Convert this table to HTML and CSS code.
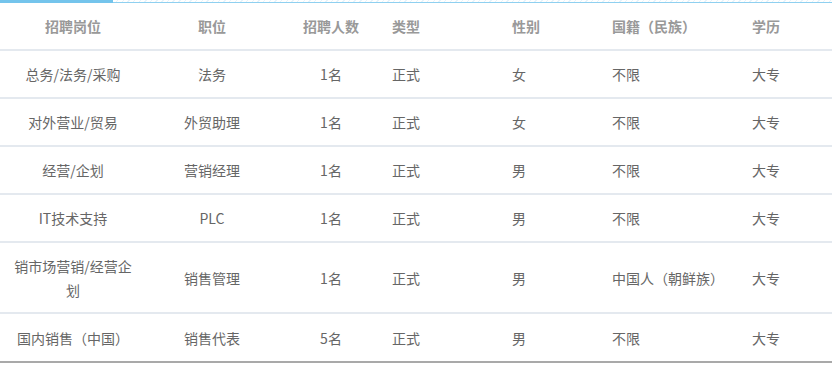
FILE: index.html
```html
<!DOCTYPE html>
<html lang="zh-CN">
<head>
<meta charset="utf-8">
<title>招聘信息</title>
<link rel="stylesheet" href="styles.css">
</head>
<body>
<div class="tabbar"><div class="tab-active"></div></div>
<table class="jobs">
  <colgroup>
    <col class="c1"><col class="c2"><col class="c3"><col class="c4"><col class="c5"><col class="c6"><col class="c7">
  </colgroup>
  <thead>
    <tr>
      <th class="ctr">招聘岗位</th><th class="ctr">职位</th><th class="ctr">招聘人数</th><th>类型</th><th>性别</th><th>国籍（民族）</th><th>学历</th>
    </tr>
  </thead>
  <tbody>
    <tr><td class="ctr">总务/法务/采购</td><td class="ctr">法务</td><td class="ctr">1名</td><td>正式</td><td>女</td><td>不限</td><td>大专</td></tr>
    <tr><td class="ctr">对外营业/贸易</td><td class="ctr">外贸助理</td><td class="ctr">1名</td><td>正式</td><td>女</td><td>不限</td><td>大专</td></tr>
    <tr><td class="ctr">经营/企划</td><td class="ctr">营销经理</td><td class="ctr">1名</td><td>正式</td><td>男</td><td>不限</td><td>大专</td></tr>
    <tr><td class="ctr">IT技术支持</td><td class="ctr">PLC</td><td class="ctr">1名</td><td>正式</td><td>男</td><td>不限</td><td>大专</td></tr>
    <tr class="tall"><td class="ctr">销市场营销/经营企划</td><td class="ctr">销售管理</td><td class="ctr">1名</td><td>正式</td><td>男</td><td>中国人（朝鲜族）</td><td>大专</td></tr>
    <tr class="last"><td class="ctr">国内销售（中国）</td><td class="ctr">销售代表</td><td class="ctr">5名</td><td>正式</td><td>男</td><td>不限</td><td>大专</td></tr>
  </tbody>
</table>
</body>
</html>
```
FILE: styles.css
```css
html, body {
  margin: 0;
  padding: 0;
  background: #fff;
}
body {
  width: 832px;
  font-family: "Noto Sans CJK SC", "Microsoft YaHei", "Liberation Sans", sans-serif;
  font-size: 14px;
  color: #666;
}
.tabbar {
  height: 2px;
  border-bottom: 1px solid #8fd0f0;
  background: repeating-linear-gradient(135deg, #fff 0 3px, #e6f3fb 3px 4px);
}
.tab-active {
  width: 113px;
  height: 3px;
  background: #74c4ec;
}
.jobs {
  width: 832px;
  border-collapse: collapse;
  table-layout: fixed;
}
.c1 { width: 146px; }
.c2 { width: 132px; }
.c3 { width: 106px; }
.c4 { width: 120px; }
.c5 { width: 100px; }
.c6 { width: 140px; }
.c7 { width: 88px; }
.jobs th {
  height: 46px;
  padding: 0 8px;
  text-align: left;
  font-weight: bold;
  color: #999;
  border-bottom: 2px solid #e4e9ef;
}
.jobs td {
  height: 46px;
  padding: 0 8px;
  text-align: left;
  line-height: 24px;
  border-bottom: 2px solid #e4e9ef;
}
.jobs .ctr {
  text-align: center;
}
.jobs tr.tall td {
  height: 69px;
}
.jobs tr.last td {
  height: 47px;
  border-bottom: 2px solid #a9a9a9;
}
```
